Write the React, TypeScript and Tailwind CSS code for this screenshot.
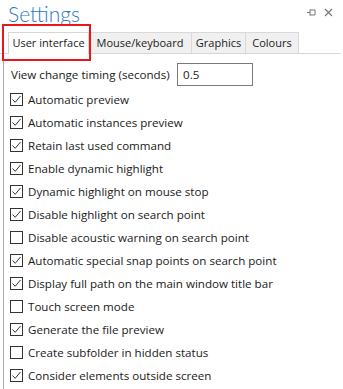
import React from "react";

const items: [string, boolean][] = [
  ["Automatic preview", true],
  ["Automatic instances preview", true],
  ["Retain last used command", true],
  ["Enable dynamic highlight", true],
  ["Dynamic highlight on mouse stop", true],
  ["Disable highlight on search point", true],
  ["Disable acoustic warning on search point", false],
  ["Automatic special snap points on search point", true],
  ["Display full path on the main window title bar", true],
  ["Touch screen mode", false],
  ["Generate the file preview", true],
  ["Create subfolder in hidden status", false],
  ["Consider elements outside screen", true],
];

function Box({ checked }: { checked: boolean }) {
  return (
    <div className="w-[13px] h-[13px] border border-[#333] bg-white flex items-center justify-center shrink-0">
      {checked && (
        <svg width="11" height="11" viewBox="0 0 11 11">
          <path d="M1.5 5.5 L4.2 8.3 L9.5 2" fill="none" stroke="#333" strokeWidth="1" />
        </svg>
      )}
    </div>
  );
}

export default function App() {
  return (
    <div
      className="w-[343px] h-[389px] bg-white relative overflow-hidden text-[11.6px] text-[#1a1a1a]"
      style={{ fontFamily: '"Open Sans", "Noto Sans", sans-serif' }}
    >
      <div className="h-[32px] flex items-start justify-between pl-[8px] pr-[10px]">
        <div className="text-[21px] leading-[27px] text-[#2b79c2] font-light" style={{ fontFamily: 'Lato, "Open Sans", sans-serif' }}>
          Settings
        </div>
        <div className="flex items-center gap-[8px] mt-[8px] text-[#777]">
          <svg width="9" height="9" viewBox="0 0 9 9">
            <path d="M0 4.5 H3 M3 1.5 V7.5 M3 2 H8 V7 H3" fill="none" stroke="#777" strokeWidth="1" />
          </svg>
          <svg width="9" height="9" viewBox="0 0 9 9">
            <path d="M1 1 L8 8 M8 1 L1 8" stroke="#777" strokeWidth="1.2" />
          </svg>
        </div>
      </div>
      <div className="flex items-end h-[22px] pl-[3px] border-b border-[#d6d6d6] mr-[2px] text-[11px]">
        <div className="w-[5px]" />
        <div className="w-[81px] h-[22px] flex items-center justify-center bg-white border border-b-0 border-[#d6d6d6] -mb-px pb-px">User interface</div>
        <div className="w-[103px] h-[21px] flex items-center justify-center bg-[#f0f0f0] border border-l-0 border-b-0 border-[#d9d9d9]">Mouse/keyboard</div>
        <div className="w-[54px] h-[21px] flex items-center justify-center bg-[#f0f0f0] border border-l-0 border-b-0 border-[#d9d9d9]">Graphics</div>
        <div className="w-[53px] h-[21px] flex items-center justify-center bg-[#f0f0f0] border border-l-0 border-b-0 border-[#d9d9d9]">Colours</div>
      </div>
      <div className="ml-[3px] border-l border-[#aaa] h-[400px] pl-[6px] pt-[9px]">
        <div className="flex items-center h-[23px]">
          <span className="w-[167px] pl-px">View change timing (seconds)</span>
          <div className="w-[76px] h-[23px] border border-[#7a7a7a] flex items-center px-[5px]">0.5</div>
        </div>
        <div className="mt-[2px]">
          {items.map(([label, c]) => (
            <div key={label} className="flex items-center gap-[5px] h-[23px]">
              <Box checked={c} />
              <span>{label}</span>
            </div>
          ))}
        </div>
      </div>
      <div className="absolute left-[2px] top-[24px] w-[89px] h-[37px] border-2 border-[#e8171e]" />
    </div>
  );
}
